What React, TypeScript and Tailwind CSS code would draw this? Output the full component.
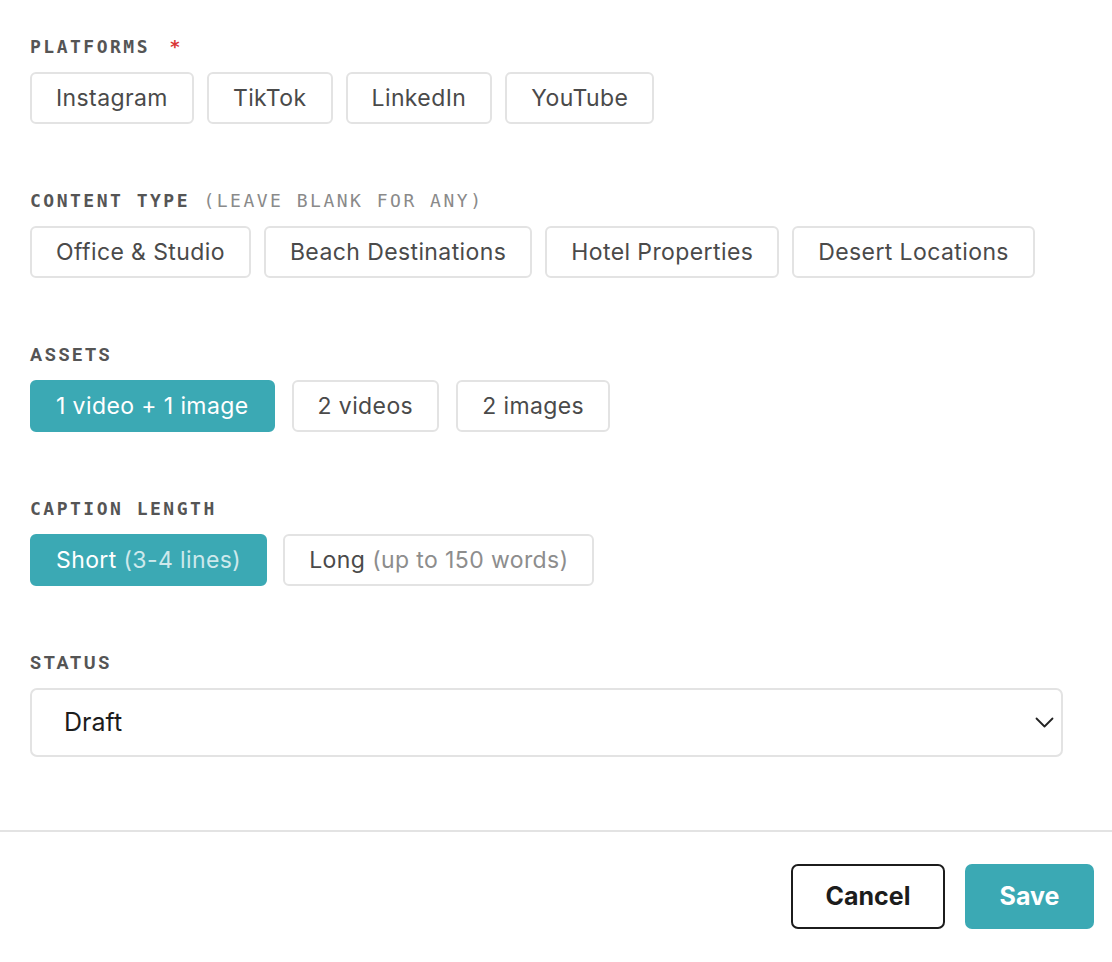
import { useState } from "react";

const mono = "font-['DejaVu_Sans_Mono',monospace]";
const sans = "font-['Inter','Noto_Sans',sans-serif]";

function Chip({
  label,
  hint,
  active,
  onClick,
}: {
  label: string;
  hint?: string;
  active?: boolean;
  onClick?: () => void;
}) {
  return (
    <button
      onClick={onClick}
      className={`h-[52px] px-[24px] rounded-[6px] border-2 text-[23px] tracking-[0.4px] whitespace-nowrap ${
        active
          ? "bg-[#3ba9b4] border-[#3ba9b4] text-white"
          : "bg-white border-[#e3e3e3] text-[#4a4a4a]"
      }`}
    >
      {label}
      {hint && (
        <span className={active ? "text-white/75" : "text-[#8d8d8d]"}> {hint}</span>
      )}
    </button>
  );
}

function Label({ children, sansLabel }: { children: React.ReactNode; sansLabel?: boolean }) {
  return (
    <div
      className={`h-5 leading-5 mb-[15px] text-[#555] font-bold uppercase ${
        sansLabel
          ? "font-['Roboto',sans-serif] text-[18px] tracking-[2.6px]"
          : `${mono} text-[18px] tracking-[2.5px]`
      }`}
    >
      {children}
    </div>
  );
}

function Chevron() {
  return (
    <svg width="19" height="11" viewBox="0 0 19 11" fill="none">
      <path d="M1.5 1.5 9.5 9.5 17.5 1.5" stroke="#222" strokeWidth="1.8" strokeLinecap="round" strokeLinejoin="round" />
    </svg>
  );
}

export default function App() {
  const [platforms, setPlatforms] = useState<string[]>([]);
  const [types, setTypes] = useState<string[]>([]);
  const [assets, setAssets] = useState("1 video + 1 image");
  const [caption, setCaption] = useState("short");

  const toggle = (list: string[], set: (v: string[]) => void, v: string) =>
    set(list.includes(v) ? list.filter((x) => x !== v) : [...list, v]);

  return (
    <div className={`w-[1112px] h-[962px] bg-white flex flex-col ${sans}`}>
      <div className="pl-[30px] pr-[49px] pt-[37px] flex flex-col gap-[67px]">
        <div>
          <Label>
            Platforms <span className="text-[#d93636] ml-[6px]">*</span>
          </Label>
          <div className="flex gap-[13px]">
            {["Instagram", "TikTok", "LinkedIn", "YouTube"].map((p) => (
              <Chip
                key={p}
                label={p}
                active={platforms.includes(p)}
                onClick={() => toggle(platforms, setPlatforms, p)}
              />
            ))}
          </div>
        </div>

        <div>
          <Label>
            Content Type{" "}
            <span className="font-normal text-[#8a8a8a]">(Leave blank for any)</span>
          </Label>
          <div className="flex gap-[13px]">
            {["Office & Studio", "Beach Destinations", "Hotel Properties", "Desert Locations"].map(
              (t) => (
                <Chip
                  key={t}
                  label={t}
                  active={types.includes(t)}
                  onClick={() => toggle(types, setTypes, t)}
                />
              )
            )}
          </div>
        </div>

        <div>
          <Label sansLabel>Assets</Label>
          <div className="flex gap-[17px]">
            {["1 video + 1 image", "2 videos", "2 images"].map((a) => (
              <Chip key={a} label={a} active={assets === a} onClick={() => setAssets(a)} />
            ))}
          </div>
        </div>

        <div>
          <Label>Caption Length</Label>
          <div className="flex gap-[16px]">
            <Chip
              label="Short"
              hint="(3-4 lines)"
              active={caption === "short"}
              onClick={() => setCaption("short")}
            />
            <Chip
              label="Long"
              hint="(up to 150 words)"
              active={caption === "long"}
              onClick={() => setCaption("long")}
            />
          </div>
        </div>

        <div>
          <Label sansLabel>Status</Label>
          <div className="h-[69px] rounded-[7px] border-2 border-[#e3e3e3] flex items-center justify-between pl-[32px] pr-[7px]">
            <span className="text-[25px] text-[#1c1c1c]">Draft</span>
            <Chevron />
          </div>
        </div>
      </div>

      <div className="mt-[73px] border-t-2 border-[#e3e3e3] flex justify-end gap-[20px] pt-[32px] pr-[18px]">
        <button className="h-[65px] w-[154px] rounded-[7px] border-2 border-[#1c1c1c] text-[25px] font-bold text-[#1c1c1c]">
          Cancel
        </button>
        <button className="h-[65px] w-[129px] rounded-[7px] bg-[#3ba9b4] text-[25px] font-bold text-white">
          Save
        </button>
      </div>
    </div>
  );
}
